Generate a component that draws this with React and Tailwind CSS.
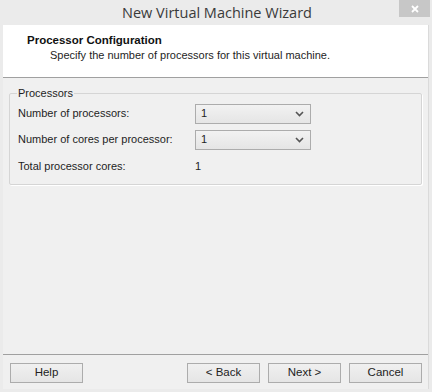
import React from "react";

function Chevron() {
  return (
    <svg width="9" height="6" viewBox="0 0 9 6" className="text-[#555]">
      <path d="M1 1l3.5 3.5L8 1" fill="none" stroke="currentColor" strokeWidth="1.6" />
    </svg>
  );
}

function Combo({ value }) {
  return (
    <div className="w-[116px] h-[20px] border border-[#acacac] bg-gradient-to-b from-[#f2f2f2] to-[#e5e5e5] flex items-center justify-between pl-[5px] pr-[6px]">
      <span>{value}</span>
      <Chevron />
    </div>
  );
}

function Button({ children }) {
  return (
    <button className="w-[73px] h-[20px] border border-[#acacac] bg-gradient-to-b from-[#f0f0f0] to-[#e5e5e5] text-[11.5px] text-[#222] leading-none">
      {children}
    </button>
  );
}

export default function App() {
  return (
    <div
      className="w-[432px] h-[392px] bg-[#ebebeb] flex flex-col text-[11px] text-[#1e1e1e]"
      style={{ fontFamily: '"Liberation Sans", Arial, sans-serif' }}
    >
      {/* title bar */}
      <div className="relative h-[25px] flex items-center justify-center">
        <span className="text-[14.5px] text-[#3a3a3a] pl-[2px]" style={{ fontFamily: '"Open Sans", sans-serif' }}>
          New Virtual Machine Wizard
        </span>
        <div className="absolute top-0 right-[2px] w-[31px] h-[17px] bg-[#c7c7c7] flex items-center justify-center">
          <svg width="8" height="8" viewBox="0 0 8 8">
            <path d="M1 1l6 6M7 1L1 7" stroke="white" strokeWidth="1.8" />
          </svg>
        </div>
      </div>

      <div className="flex-1 flex flex-col ml-[3px] mr-[3px] bg-[#f0f0f0] border-r border-[#dadada]">
        {/* header */}
        <div className="h-[53px] bg-white border-b border-[#a0a0a0] pl-[24px] pt-[8px] leading-[15px]">
          <div className="font-bold text-[11.5px] text-[#111]">Processor Configuration</div>
          <div className="pl-[23px]">
            Specify the number of processors for this virtual machine.
          </div>
        </div>

        {/* body */}
        <div className="flex-1 pl-[6px] pr-[6px] pt-[7px]">
          <fieldset className="border border-[#d5d5d5] rounded-[2px] pl-[8px] pr-[8px] pb-[10px] h-[100px] shadow-[1px_1px_0_white]">
            <legend className="px-[1px] ml-[-1px] text-[#1e1e1e]">Processors</legend>
            <div className="flex flex-col gap-[6px] mt-[2px]">
              <div className="flex items-center">
                <span className="w-[177px]">Number of processors:</span>
                <Combo value="1" />
              </div>
              <div className="flex items-center">
                <span className="w-[177px]">Number of cores per processor:</span>
                <Combo value="1" />
              </div>
              <div className="flex items-center h-[20px] mt-[1px]">
                <span className="w-[177px]">Total processor cores:</span>
                <span>1</span>
              </div>
            </div>
          </fieldset>
        </div>

        {/* footer */}
        <div className="border-t border-[#a0a0a0] h-[35px] flex items-start pt-[8px] pl-[7px] pr-[6px]">
          <Button>Help</Button>
          <div className="flex-1" />
          <div className="flex gap-[8px]">
            <Button>&lt; Back</Button>
            <Button>Next &gt;</Button>
            <Button>Cancel</Button>
          </div>
        </div>
      </div>
      <div className="h-[3px]" />
    </div>
  );
}
